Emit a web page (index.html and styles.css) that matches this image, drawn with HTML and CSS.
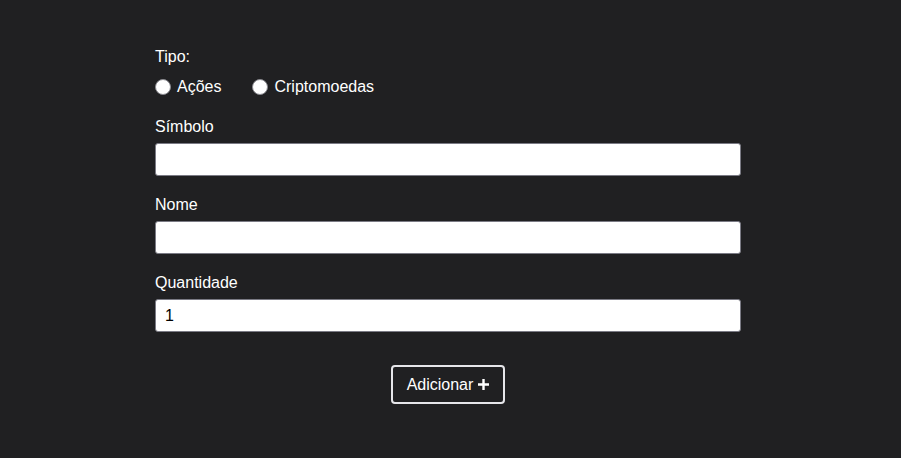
FILE: index.html
```html
<!DOCTYPE html>
<html lang="pt">
<head>
<meta charset="utf-8">
<link rel="stylesheet" href="styles.css">
</head>
<body>
<form class="form">
  <div class="group">
    <span class="label">Tipo:</span>
    <div class="radios">
      <label class="radio"><span class="dot"></span>Ações</label>
      <label class="radio"><span class="dot"></span>Criptomoedas</label>
    </div>
  </div>
  <div class="group">
    <span class="label">Símbolo</span>
    <div class="input"></div>
  </div>
  <div class="group">
    <span class="label">Nome</span>
    <div class="input"></div>
  </div>
  <div class="group">
    <span class="label">Quantidade</span>
    <div class="input">1</div>
  </div>
  <div class="actions">
    <button type="button" class="btn">Adicionar <svg width="13" height="13" viewBox="0 0 13 13"><path d="M6.5 1v11M1 6.5h11" stroke="#fff" stroke-width="2.4"/></svg></button>
  </div>
</form>
</body>
</html>
```
FILE: styles.css
```css
html, body {
  margin: 0;
  background: #202022;
  height: 100%;
}
body {
  font-family: "Liberation Sans", Arial, sans-serif;
  font-size: 16px;
  color: #ffffff;
}
.form {
  width: 586px;
  margin-left: 155px;
  padding-top: 48px;
  display: flex;
  flex-direction: column;
}
.group {
  display: flex;
  flex-direction: column;
  margin-bottom: 20px;
}
.label {
  line-height: 18px;
  margin-bottom: 7px;
}
.radios {
  display: flex;
  gap: 31px;
  line-height: 18px;
  margin-top: 5px;
  margin-bottom: 2px;
}
.radio {
  display: flex;
  align-items: center;
  gap: 6px;
}
.dot {
  width: 16px;
  height: 16px;
  border-radius: 50%;
  background: #fff;
  box-sizing: border-box;
  border: 1px solid #8a8a90;
}
.input {
  height: 33px;
  box-sizing: border-box;
  border: 1px solid #7a7a84;
  border-radius: 3px;
  background: #fff;
  color: #000;
  padding-left: 9px;
  line-height: 31px;
}
.actions {
  display: flex;
  justify-content: center;
  margin-top: 13px;
}
.btn {
  font-family: inherit;
  font-size: 16px;
  color: #fff;
  background: transparent;
  border: 2px solid #e6e6ea;
  border-radius: 4px;
  width: 114px;
  height: 39px;
  padding: 0 0 0 1px;
  display: flex;
  align-items: center;
  justify-content: center;
  gap: 4px;
}
```
